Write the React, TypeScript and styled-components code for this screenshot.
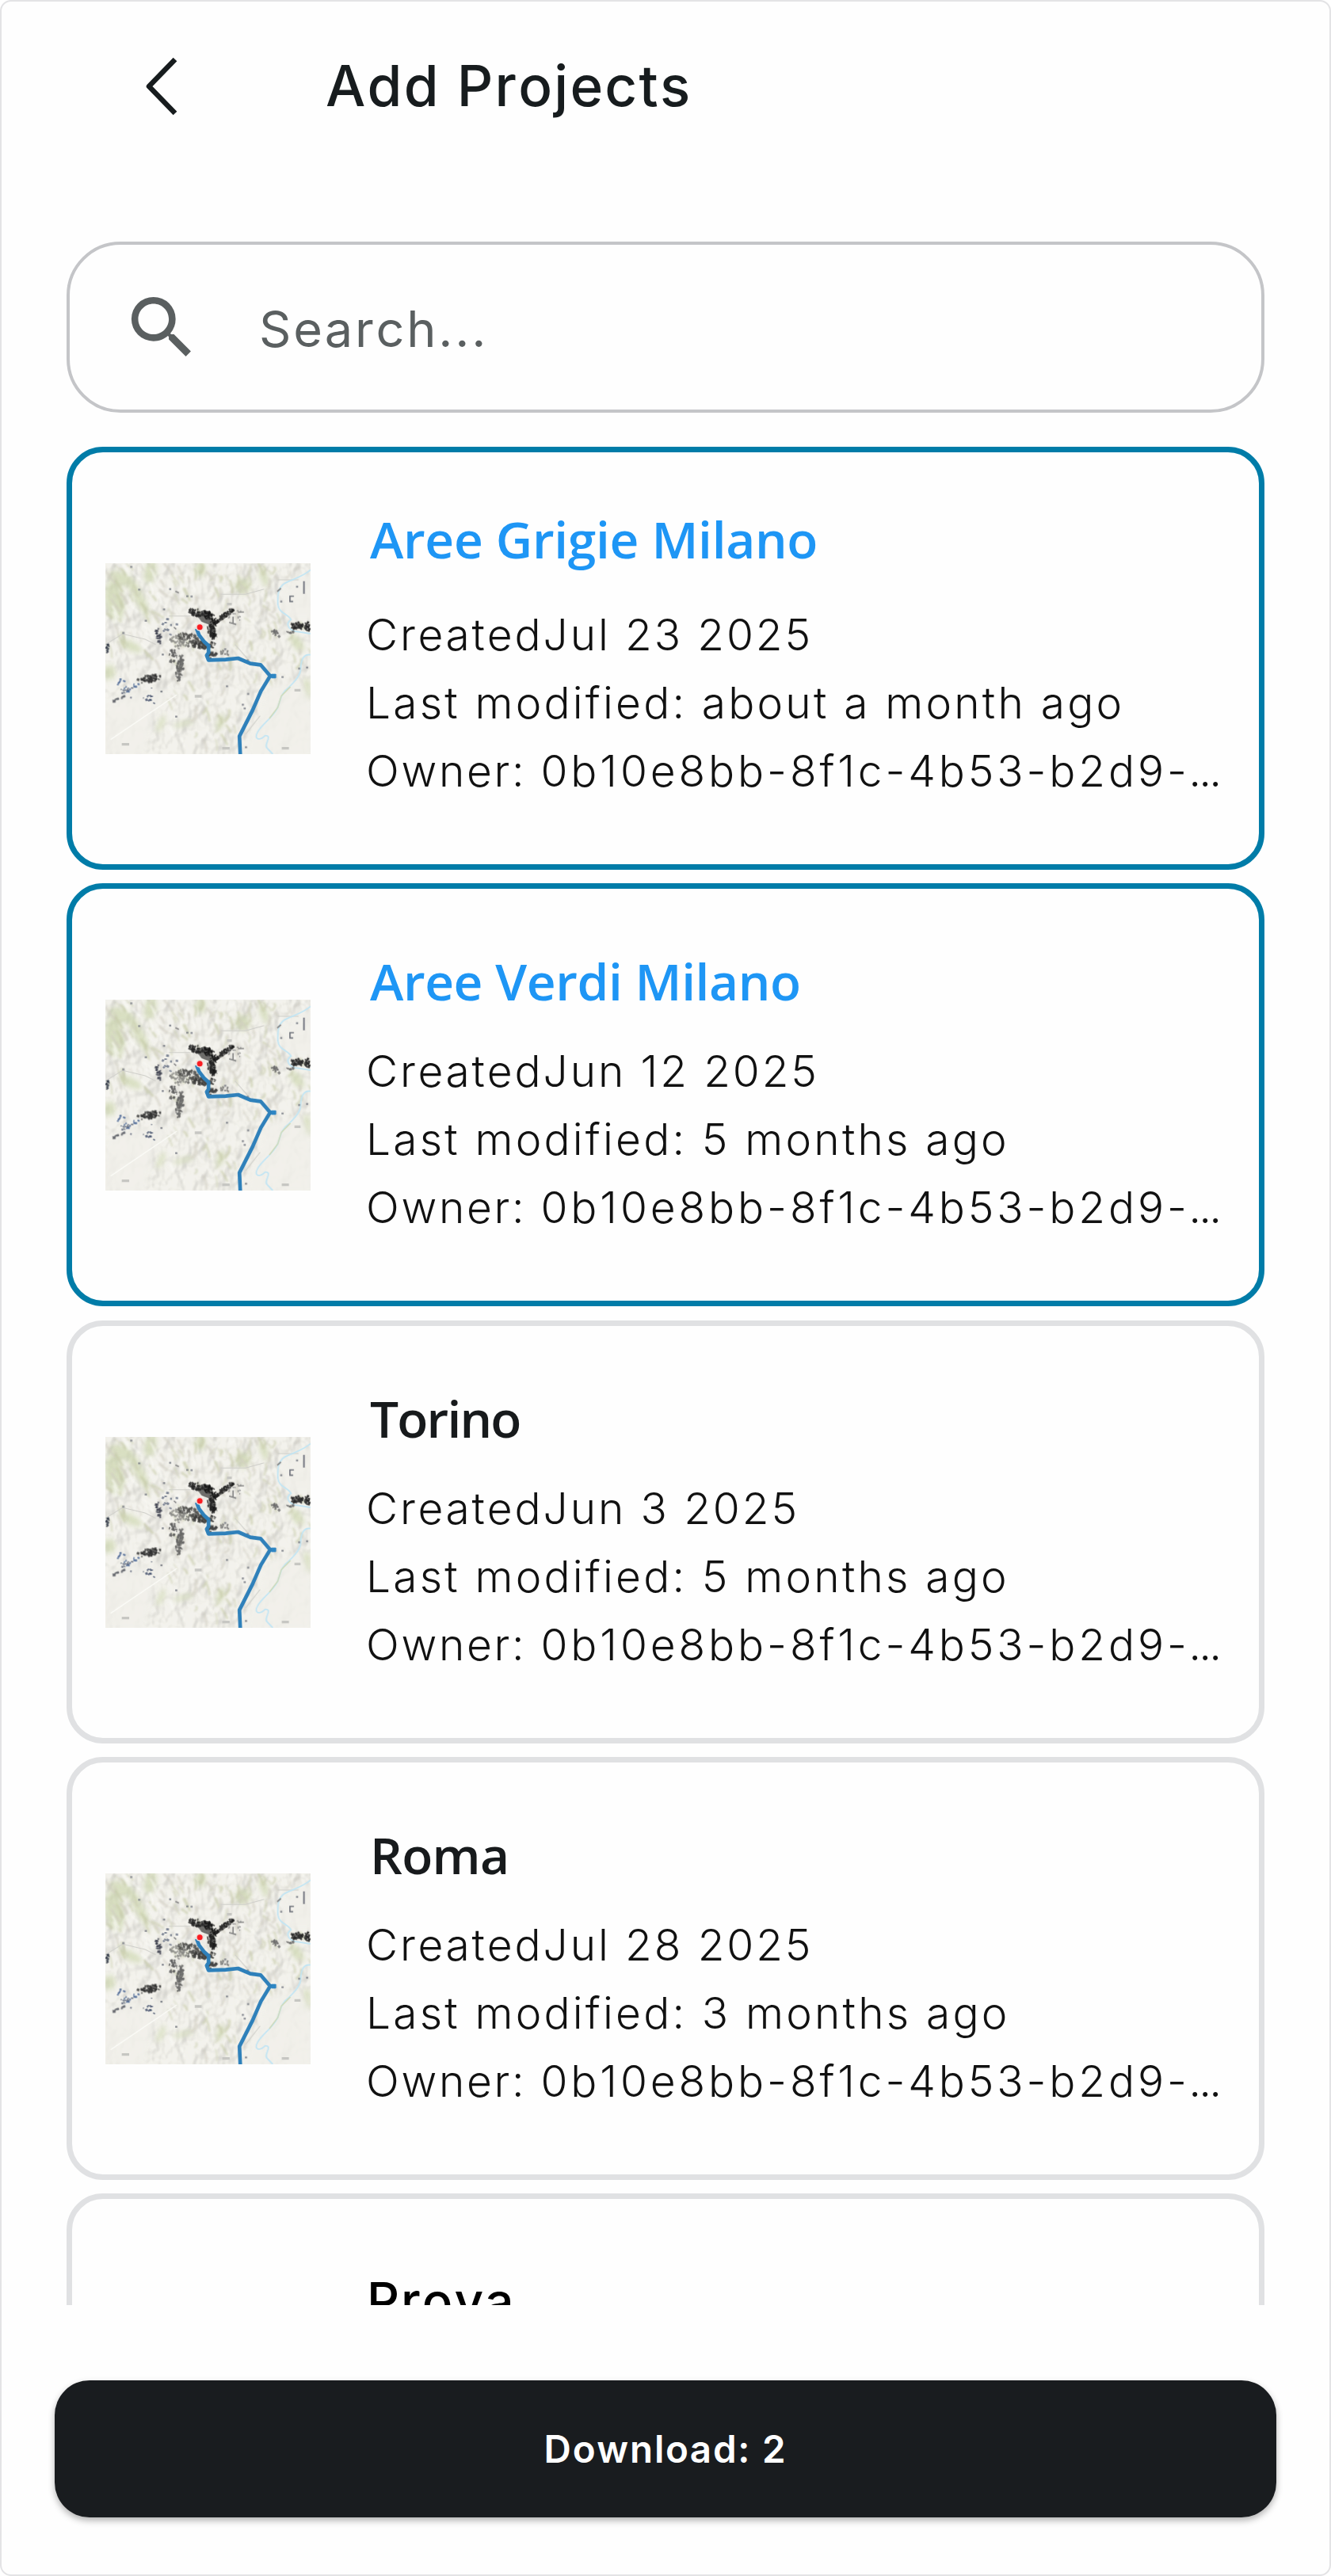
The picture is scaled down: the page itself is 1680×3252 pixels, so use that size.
import React, { useId } from "react";
import styled, { createGlobalStyle } from "styled-components";

const GlobalStyle = createGlobalStyle`
  * { box-sizing: border-box; }
  body { margin: 0; background: #fff; }
`;

const Screen = styled.main`
  display: flex;
  flex-direction: column;
  width: 1680px;
  height: 3252px;
  padding: 0 82px;
  border: 2px solid #e3e3e5;
  border-radius: 14px;
  background: #fefefe;
  font-family: Inter, "Liberation Sans", sans-serif;
  font-kerning: none;
  overflow: hidden;
`;

const Header = styled.header`
  display: flex;
  align-items: center;
  height: 303px;
  padding: 0 0 91px 97px;
`;

const BackIcon = styled.svg`
  width: 44px;
  height: 76px;
  margin: 2px 186px 0 0;
`;

const Title = styled.h1`
  margin: 0;
  font-size: 71px;
  font-weight: 500;
  line-height: 86px;
  letter-spacing: 2.2px;
  color: #171c1e;
`;

const SearchBox = styled.div`
  display: flex;
  align-items: center;
  height: 216px;
  padding-left: 65px;
  border: 4.5px solid #c4c5c8;
  border-radius: 68px;
`;

const SearchIcon = styled.svg`
  width: 103px;
  height: 103px;
  margin: 0 71px 0 0;
`;

const SearchInput = styled.input`
  flex: 1;
  min-width: 0;
  padding: 3px 0 0;
  border: 0;
  outline: 0;
  background: transparent;
  font: 400 63px/76px Inter, sans-serif;
  font-kerning: none;
  letter-spacing: 2.8px;
  &::placeholder { color: #5a5f60; opacity: 1; }
`;

const List = styled.section`
  display: flex;
  flex-direction: column;
  gap: 17.3px;
  height: 2346px;
  margin-top: 43px;
  overflow: hidden;
`;

const Card = styled.article<{ $selected?: boolean }>`
  display: flex;
  flex: none;
  align-items: flex-start;
  height: 534px;
  padding: 0 42px;
  border: 7px solid ${(p) => (p.$selected ? "#007ca8" : "#e0e1e3")};
  border-radius: 46px;
`;

const Thumbnail = styled.svg`
  flex: none;
  width: 259px;
  height: 241px;
  margin: 140px 70px 0 0;
`;

const EmptyThumbnail = styled.div`
  flex: none;
  width: 259px;
  margin-right: 71px;
`;

const Details = styled.div<{ $raised?: boolean }>`
  flex: 1;
  min-width: 0;
  padding-top: ${(p) => (p.$raised ? 72 : 79)}px;
`;

const Name = styled.h2<{ $selected?: boolean; $raised?: boolean; $spacing: number }>`
  margin: 0 0 ${(p) => (p.$raised ? 39 : 32)}px;
  padding-left: 5px;
  font: 600 64px/76px "Open Sans", "Noto Sans", sans-serif;
  letter-spacing: ${(p) => p.$spacing}px;
  white-space: nowrap;
  color: ${(p) => (p.$selected ? "#1e96f5" : "#171a1c")};
`;

const PlainName = styled.h2`
  margin: 12px 0 28px;
  font-size: 64px;
  font-weight: 500;
  line-height: 76px;
  letter-spacing: 2px;
  color: #000;
`;

const Meta = styled.p<{ $spacing: number }>`
  margin: 0;
  font-size: 55px;
  font-weight: 300;
  line-height: 86px;
  letter-spacing: ${(p) => p.$spacing}px;
  color: #111;
  white-space: nowrap;
`;

const OwnerId = styled.span`
  letter-spacing: 3.9px;
`;

const Ellipsis = styled.span`
  font-size: 45px;
  font-weight: 400;
  letter-spacing: 0;
`;

const DownloadButton = styled.button`
  flex: none;
  height: 173px;
  margin: 95px -15px 0;
  padding: 0;
  border: 0;
  border-radius: 44px;
  background: #191c1f;
  box-shadow: 0 4px 9px rgba(0, 0, 0, 0.3);
  color: #fff;
  font: 600 47.5px/56px Inter, sans-serif;
  font-kerning: none;
  letter-spacing: 1.8px;
`;

type Speck = { x: number; y: number; w: number; h: number; a: number; c: string };

const random = (seed: number) => () => {
  seed = (seed * 16807) % 2147483647;
  return seed / 2147483647;
};

/* x, y, radius x, radius y, rotation, count, colour */
const clusters: [number, number, number, number, number, number, string][] = [
  [385, 219, 34, 13, 15, 34, "#252525"],
  [440, 240, 38, 16, 45, 52, "#171717"],
  [498, 226, 36, 10, -35, 32, "#1d1d1d"],
  [443, 290, 34, 16, 65, 46, "#1d1d1d"],
  [365, 325, 58, 24, 25, 85, "#51514f"],
  [415, 342, 45, 14, 0, 45, "#3c3c3b"],
  [320, 330, 38, 26, 0, 34, "#8c8c88"],
  [440, 380, 24, 12, 0, 28, "#444"],
  [296, 385, 14, 28, 0, 22, "#5b5b5b"],
  [321, 430, 52, 14, 97, 75, "#686866"],
  [205, 470, 44, 14, -10, 48, "#303030"],
  [240, 306, 9, 32, -12, 18, "#414451"],
  [128, 485, 42, 34, 0, 14, "#38588b"],
  [160, 520, 80, 32, 0, 12, "#515b71"],
  [90, 546, 25, 4, -25, 14, "#64666d"],
  [213, 550, 24, 14, 40, 9, "#43506b"],
  [766, 270, 24, 16, 0, 42, "#2b2b2b"],
  [804, 273, 11, 18, 0, 24, "#242424"],
  [684, 296, 22, 9, 45, 16, "#6a6a6a"],
  [738, 292, 14, 6, 0, 8, "#666"],
  [48, 358, 6, 22, 0, 12, "#333b49"],
  [285, 275, 40, 32, 0, 9, "#606a80"],
  [530, 230, 30, 22, 0, 10, "#888"],
  [490, 370, 20, 14, 0, 9, "#777"],
];

const specks: Speck[] = (() => {
  const next = random(4127);
  const out: Speck[] = [];
  clusters.forEach(([cx, cy, rx, ry, rotation, count, c]) => {
    const t = (rotation * Math.PI) / 180;
    for (let i = 0; i < count; i += 1) {
      const r = Math.sqrt(next());
      const angle = next() * Math.PI * 2;
      const u = r * rx * Math.cos(angle);
      const v = r * ry * Math.sin(angle);
      out.push({
        x: cx + u * Math.cos(t) - v * Math.sin(t),
        y: cy + u * Math.sin(t) + v * Math.cos(t),
        w: 4 + next() * 7,
        h: 4 + next() * 6,
        a: rotation + next() * 40,
        c,
      });
    }
  });
  const lone = [
    [138, 46], [285, 130], [350, 157], [366, 158], [262, 207], [193, 250], [765, 121], [773, 431],
    [803, 427], [710, 463], [572, 729], [560, 568], [567, 582], [500, 498], [308, 613], [252, 518],
    [578, 400], [493, 358], [491, 400], [108, 296], [257, 378], [580, 527], [705, 177], [168, 132],
  ];
  lone.forEach(([x, y]) => out.push({ x, y, w: 8, h: 7, a: 0, c: "#72767f" }));
  return out;
})();

const ridges = (() => {
  const next = random(913);
  const out: { d: string; c: string; w: number }[] = [];
  for (let i = 0; i < 330; i += 1) {
    const x = 40 + next() * 776;
    const y = 32 + Math.pow(next(), 1.25) * 680;
    if (y > 470 && (x > 540 || x < 240)) continue;
    if (x < 270 && y > 400) continue;
    if (x > 690 && y > 100 && y < 250) continue;
    const dx = x < 330 ? 8 + next() * 24 : (next() - 0.4) * 44;
    const dy = 14 + next() * 32;
    const shade = next();
    out.push({
      d: `M${x} ${y}q${dx * 0.1 + 8} ${dy * 0.4} ${dx} ${dy}`,
      c: shade > 0.6 ? "#c6caa8" : shade > 0.2 ? "#d0cdc1" : "#fbfbf7",
      w: 3 + next() * 7,
    });
  }
  return out;
})();

const greens = [
  [75, 175, 36, 75, -10], [160, 150, 18, 95, -28], [210, 65, 22, 45, 10], [135, 345, 48, 17, 25],
  [55, 445, 22, 28, 0], [400, 55, 18, 30, 0], [560, 120, 28, 30, 20], [640, 85, 14, 40, -20],
  [475, 635, 12, 34, 20], [335, 640, 42, 8, -15], [800, 510, 16, 42, 0], [765, 335, 18, 38, -35],
  [95, 90, 45, 26, 20], [250, 640, 10, 34, 25],
];

function MapThumbnail() {
  const id = useId();
  const relief = `${id}relief`;
  const soft = `${id}soft`;
  const medium = `${id}medium`;
  const fine = `${id}fine`;
  return (
    <Thumbnail viewBox="40 32 776 723" preserveAspectRatio="none" aria-hidden="true">
      <defs>
        <filter id={relief} x="0" y="0" width="1" height="1" colorInterpolationFilters="sRGB">
          <feTurbulence type="fractalNoise" baseFrequency="0.014 0.011" numOctaves={3} seed={8} />
          <feDiffuseLighting surfaceScale={28} diffuseConstant={1.08} lightingColor="#fbfaf2">
            <feDistantLight azimuth={215} elevation={66} />
          </feDiffuseLighting>
        </filter>
        <filter id={soft} x="-.2" y="-.2" width="1.4" height="1.4">
          <feGaussianBlur stdDeviation={9} />
        </filter>
        <filter id={medium} x="-.1" y="-.1" width="1.2" height="1.2">
          <feGaussianBlur stdDeviation={2.4} />
        </filter>
        <filter id={fine} x="-.1" y="-.1" width="1.2" height="1.2">
          <feGaussianBlur stdDeviation={1.7} />
        </filter>
      </defs>
      <rect x="40" y="32" width="776" height="723" fill="#f1f0ea" />
      <rect x="40" y="32" width="776" height="723" filter={`url(#${relief})`} opacity=".18" />
      <g filter={`url(#${soft})`} fill="#c6d2a4" opacity=".6">
        {greens.map(([x, y, rx, ry, r]) => (
          <ellipse key={`${x}-${y}`} cx={x} cy={y} rx={rx} ry={ry} transform={`rotate(${r} ${x} ${y})`} />
        ))}
      </g>
      <g filter={`url(#${medium})`} fill="none" strokeLinecap="round" opacity=".65">
        {ridges.map((r, i) => (
          <path key={i} d={r.d} stroke={r.c} strokeWidth={r.w} />
        ))}
      </g>
      <g filter={`url(#${soft})`} fill="#f1f0ea" opacity=".85">
        <path d="M30 575L110 520 300 510 230 600 190 765H30ZM660 490L780 470 830 580V765H570L590 670Z" />
        <path d="M700 160L740 110 830 60V240H740L695 210Z" />
      </g>
      <g filter={`url(#${fine})`} fill="none">
        <path d="M40 340L105 300 190 320 230 340M280 232H360M475 150H570L640 130M692 95H770M530 340L600 420M570 680L625 610" stroke="#cfcfca" strokeWidth="3" />
        <path d="M60 700L310 530" stroke="#fbfbf7" strokeWidth="4" />
        <path d="M816 57C785 84 750 91 718 108C690 128 692 155 692 187C694 222 732 224 742 246C717 263 735 289 771 292L816 299" stroke="#c3e5f3" strokeWidth="5.5" />
        <path d="M816 379C786 375 780 403 778 431C779 457 754 481 733 503C701 526 704 548 690 582C668 621 637 638 617 669C598 702 624 705 644 685C676 684 633 722 654 735L673 755" stroke="#c3e5f3" strokeWidth="5.5" />
        <path d="M740 500L705 535 692 578 660 620" stroke="#ccd8b4" strokeWidth="4" />
      </g>
      <g filter={`url(#${fine})`}>
        <path d="M356 206L382 222 410 210 436 214 452 250 489 236 503 212 524 214 500 236 455 265 450 285 464 314 446 304 428 290 436 266 404 254 392 238 368 228Z" fill="#202020" opacity=".62" />
        <path d="M170 469L195 471 216 451 230 454 220 478 190 484Z" fill="#303030" opacity=".45" />
        <path d="M749 266L764 254 784 262 779 280 757 279Z" fill="#333" opacity=".55" />
        <path d="M791 100V148" stroke="#424857" strokeWidth="6" opacity=".7" />
        <path d="M753 157H738V177H750" fill="none" stroke="#6d717a" strokeWidth="5" />
        <path d="M523 234V263M508 256L535 264M541 217H564M305 138L318 144M299 274L308 282M690 139L704 127" stroke="#858585" strokeWidth="5" />
        {specks.map((s, i) => (
          <rect key={i} x={s.x - s.w / 2} y={s.y - s.h / 2} width={s.w} height={s.h} fill={s.c} opacity=".8" transform={`rotate(${s.a} ${s.x} ${s.y})`} />
        ))}
        <path d="M378 536H404M755 513H778M482 733H510M707 733H734M102 718H130M500 187H518" stroke="#c6c6c2" strokeWidth="10" />
        <path d="M385 280L394 304 414 330 430 344 430 371 423 381 430 399 495 397 542 392 588 412 627 417 647 440 663 459 628 517 597 588 547 687 550 755M660 459H686" fill="none" stroke="#2f80ba" strokeWidth="14" strokeLinejoin="round" />
        <path d="M676 451V468" stroke="#2f86c4" strokeWidth="16" />
        <circle cx="397" cy="274" r="15" fill="#f2dedb" />
        <circle cx="397" cy="274" r="10.5" fill="#fa1e21" />
      </g>
    </Thumbnail>
  );
}

type Project = { name: string; created: string; modified: string; spacing: number; selected?: boolean; raised?: boolean };

const projects: Project[] = [
  { name: "Aree Grigie Milano", created: "Jul 23 2025", modified: "about a month ago", spacing: -0.3, selected: true, raised: true },
  { name: "Aree Verdi Milano", created: "Jun 12 2025", modified: "5 months ago", spacing: -0.4, selected: true },
  { name: "Torino", created: "Jun 3 2025", modified: "5 months ago", spacing: -1.8 },
  { name: "Roma", created: "Jul 28 2025", modified: "3 months ago", spacing: -0.7 },
];

export default function App() {
  return (
    <>
      <GlobalStyle />
      <Screen>
        <Header>
          <BackIcon viewBox="0 0 44 76" fill="none" aria-hidden="true">
            <path d="M40 4L7 38L40 72" stroke="#171c1e" strokeWidth="6.5" strokeLinejoin="round" />
          </BackIcon>
          <Title>Add Projects</Title>
        </Header>
        <SearchBox>
          <SearchIcon viewBox="0 0 24 24" aria-hidden="true">
            <path fill="#5a5f60" d="M15.5 14h-.79l-.28-.27A6.471 6.471 0 0 0 16 9.5 6.5 6.5 0 1 0 9.5 16c1.61 0 3.09-.59 4.23-1.57l.27.28v.79l5 4.99L20.49 19l-4.99-5zm-6 0C7.01 14 5 11.99 5 9.5S7.01 5 9.5 5 14 7.01 14 9.5 11.99 14 9.5 14z" />
          </SearchIcon>
          <SearchInput placeholder="Search..." aria-label="Search" />
        </SearchBox>
        <List>
          {projects.map((p) => (
            <Card key={p.name} $selected={p.selected}>
              <MapThumbnail />
              <Details $raised={p.raised}>
                <Name $selected={p.selected} $raised={p.raised} $spacing={p.spacing}>{p.name}</Name>
                <Meta $spacing={2.9}>Created{p.created}</Meta>
                <Meta $spacing={3.2}>Last modified: {p.modified}</Meta>
                <Meta $spacing={2.7}>
                  Owner: <OwnerId>0b10e8bb-8f1c-4b53-b2d9-</OwnerId><Ellipsis>…</Ellipsis>
                </Meta>
              </Details>
            </Card>
          ))}
          <Card>
            <EmptyThumbnail />
            <Details>
              <PlainName>Prova</PlainName>
            </Details>
          </Card>
        </List>
        <DownloadButton>Download: 2</DownloadButton>
      </Screen>
    </>
  );
}
